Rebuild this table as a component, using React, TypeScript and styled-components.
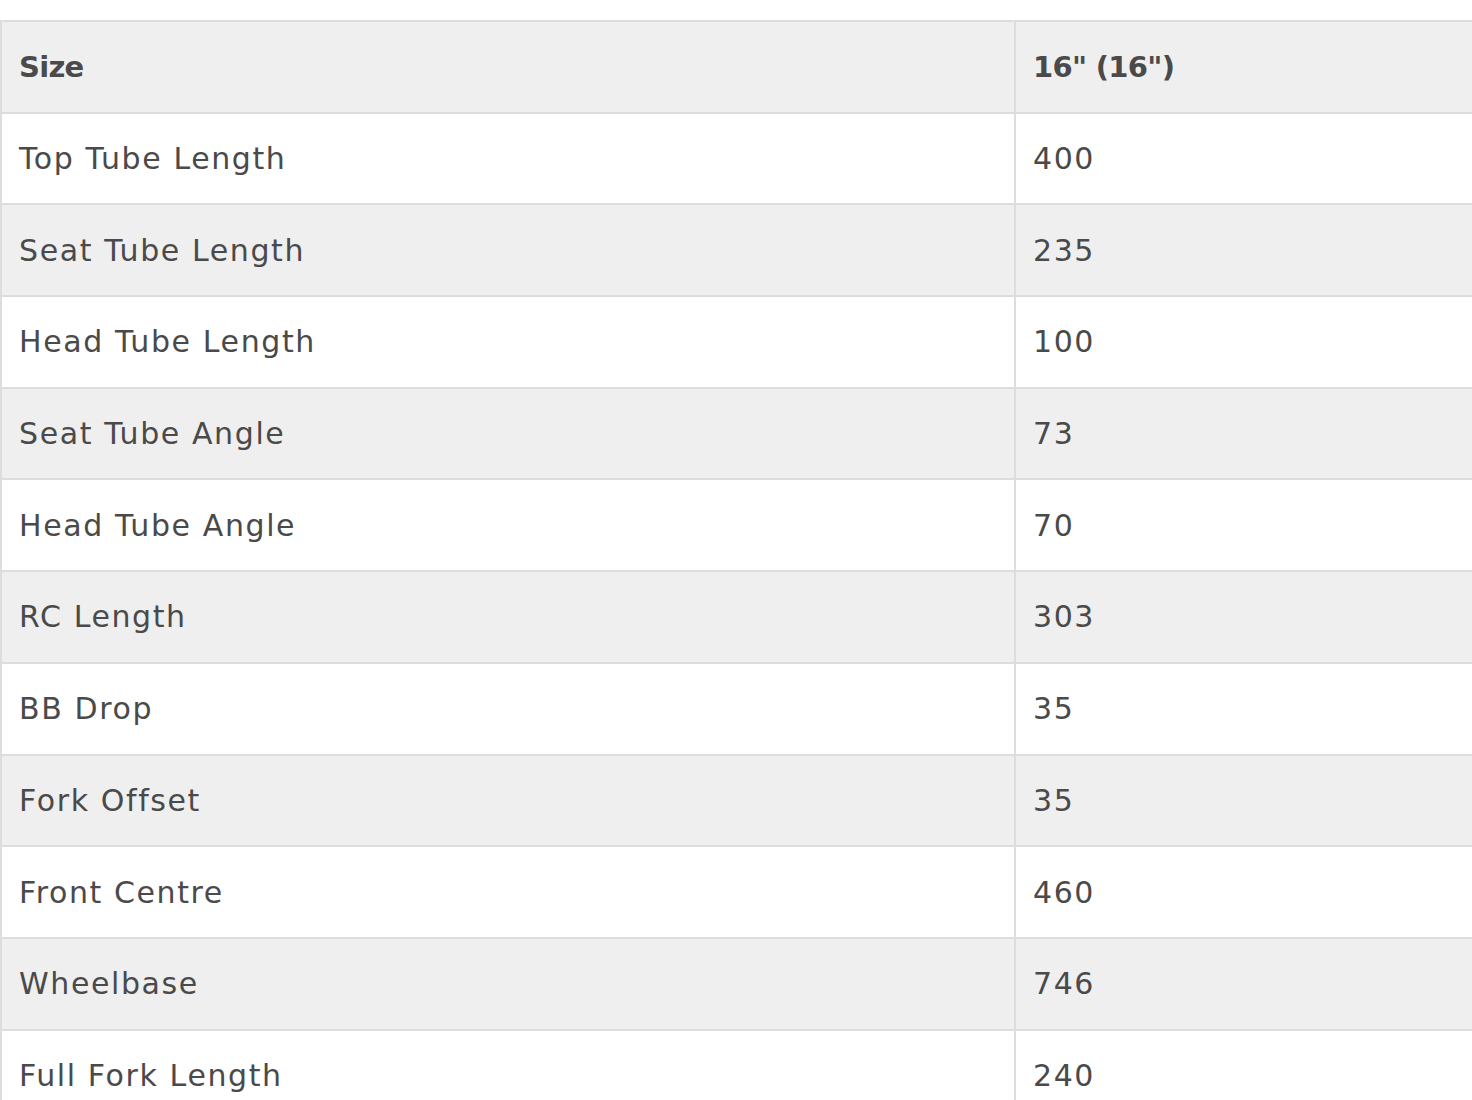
import React from "react";
import styled, { createGlobalStyle } from "styled-components";

const Global = createGlobalStyle`
  html, body {
    margin: 0;
    padding: 0;
    background: #ffffff;
    overflow: hidden;
  }
  body {
    font-family: "DejaVu Sans", "Open Sans", sans-serif;
  }
`;

const Page = styled.div`
  padding-top: 20px;
  width: 1472px;
  overflow: hidden;
`;

const Table = styled.table`
  width: 2030px;
  border-collapse: collapse;
  border: 2px solid #dddddd;
  table-layout: fixed;
`;

const Row = styled.tr<{ $shaded: boolean }>`
  background: ${(p) => (p.$shaded ? "#efefef" : "#ffffff")};
`;

const Cell = styled.td<{ $head?: boolean }>`
  height: 91.7px;
  box-sizing: border-box;
  padding: 0 16px 0 17px;
  border: 2px solid #dddddd;
  color: #4a4a4a;
  font-size: ${(p) => (p.$head ? "29px" : "30px")};
  font-weight: ${(p) => (p.$head ? 700 : 400)};
  letter-spacing: ${(p) => (p.$head ? "-0.7px" : "1.6px")};
  vertical-align: middle;
  white-space: nowrap;
  width: 1012px;
`;

const rows: [string, string][] = [
  ["Top Tube Length", "400"],
  ["Seat Tube Length", "235"],
  ["Head Tube Length", "100"],
  ["Seat Tube Angle", "73"],
  ["Head Tube Angle", "70"],
  ["RC Length", "303"],
  ["BB Drop", "35"],
  ["Fork Offset", "35"],
  ["Front Centre", "460"],
  ["Wheelbase", "746"],
  ["Full Fork Length", "240"],
];

export default function App() {
  return (
    <>
      <Global />
      <Page>
        <Table>
          <tbody>
            <Row $shaded>
              <Cell $head>Size</Cell>
              <Cell $head>16" (16")</Cell>
            </Row>
            {rows.map(([label, value], i) => (
              <Row key={label} $shaded={i % 2 === 1}>
                <Cell>{label}</Cell>
                <Cell>{value}</Cell>
              </Row>
            ))}
          </tbody>
        </Table>
      </Page>
    </>
  );
}
